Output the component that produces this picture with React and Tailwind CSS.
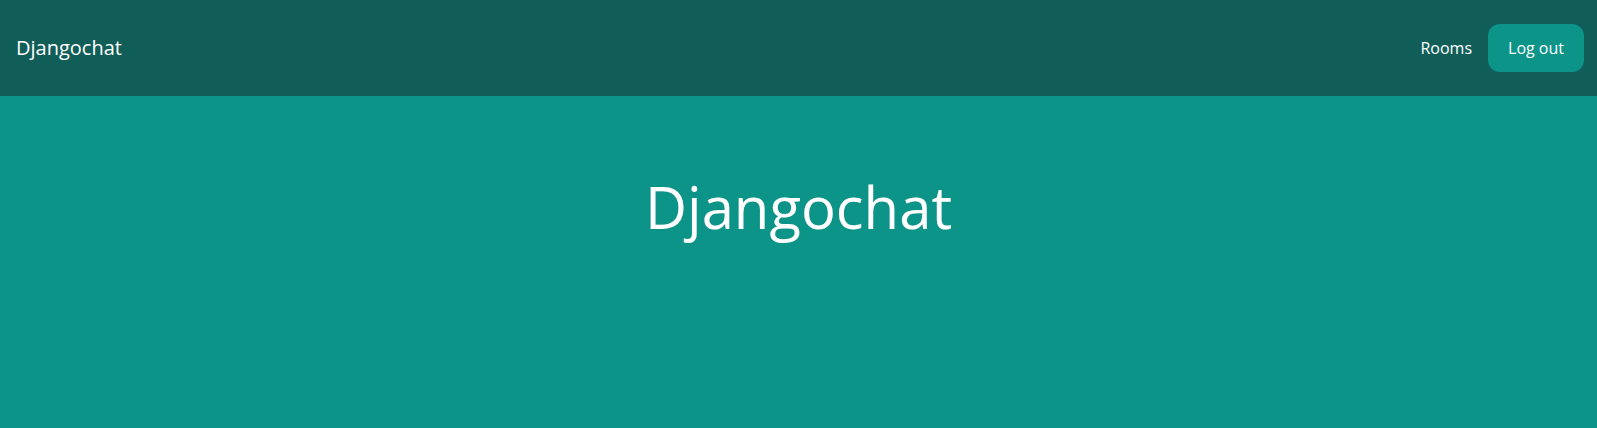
import React from "react";

export default function App() {
  return (
    <div className="min-h-screen bg-[#0d9488] font-['Open_Sans',sans-serif] text-white">
      <nav className="flex justify-between items-center bg-[#115e59] py-6 pl-4 pr-[13px]">
        <a href="#" className="text-xl">Djangochat</a>
        <div className="flex items-center space-x-4">
          <a href="#" className="text-base">Rooms</a>
          <a href="#" className="px-5 py-3 rounded-xl bg-[#0d9488] text-base leading-6">
            Log out
          </a>
        </div>
      </nav>
      <main className="pt-[81px] text-center">
        <h1 className="text-[58px] leading-[60px]">Djangochat</h1>
      </main>
    </div>
  );
}
